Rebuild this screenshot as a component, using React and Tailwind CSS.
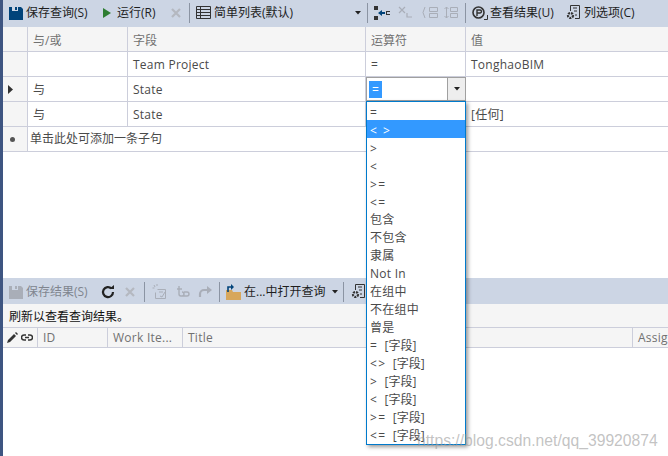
import React from "react";

const FF = "font-['Open_Sans','Noto_Sans_CJK_SC',sans-serif]";

const Save = ({ c = "#00437a" }) => (
  <svg width="14" height="14" viewBox="0 0 14 14"><path fill={c} d="M0 1h12l2 2v11H0z" /><path fill="#ccd5e4" d="M3 1h6v4H3z" /><path fill={c} d="M6 1h2v3H6z" /></svg>
);
const X = ({ c = "#b4b8c0" }) => (
  <svg width="10" height="10" viewBox="0 0 10 10"><path d="M1 1l8 8M9 1l-8 8" stroke={c} strokeWidth="2.2" /></svg>
);
const Sep = () => <div className="w-px h-5 bg-[#8b94a3] shrink-0" />;
const Caret = () => <svg width="6" height="4" viewBox="0 0 6 4" className="shrink-0"><path d="M0 0h6L3 3.5z" fill="#222" /></svg>;
const Gear = () => (
  <svg width="14" height="15" viewBox="0 0 14 15" fill="none"><path d="M4.500 6V.5h9v13H9" stroke="#333" /><path d="M7 3h4M8 6h3M9 10h2" stroke="#333" /><circle cx="4.500" cy="10.500" r="2.500" stroke="#333" strokeWidth="2.200" strokeDasharray="2 1" /></svg>
);

const ops = [["=", ""], ["< >", ""], [">", ""], ["<", ""], [">=", ""], ["<=", ""], ["", "包含"], ["", "不包含"], ["", "隶属"], ["", "Not In"], ["", "在组中"], ["", "不在组中"], ["", "曾是"], ["=", " [字段]"], ["<>", " [字段]"], [">", " [字段]"], ["<", " [字段]"], [">=", " [字段]"], ["<=", " [字段]"]];

const Row = ({ marker, a, b, c, d }) => (
  <div className="flex h-[25px] border-b border-[#cccedb] text-[12px] text-[#4a4a4a] shrink-0">
    <div className="w-[25px] bg-[#f5f5f5] border-r border-[#cccedb] flex items-center pl-[5px] shrink-0">{marker}</div>
    <div className="w-[100px] border-r border-[#cccedb] pl-[5px] pt-[2px] flex items-center shrink-0">{a}</div>
    <div className="w-[238px] border-r border-[#cccedb] pl-[5px] pt-[2px] flex items-center shrink-0 tracking-[0.25px]">{b}</div>
    <div className="w-[100px] border-r border-[#cccedb] pl-[5px] pt-[2px] flex items-center shrink-0">{c}</div>
    <div className="flex-1 pl-[5px] pt-[2px] flex items-center tracking-[0.25px]">{d}</div>
  </div>
);

export default function App() {
  return (
    <div className={`relative w-[668px] h-[456px] overflow-hidden bg-white flex ${FF}`}>
      <div className="w-[3px] bg-[#3e5581] shrink-0" />
      <div className="flex-1 flex flex-col min-w-0">
        {/* Top toolbar */}
        <div className="h-[27px] bg-[#ccd5e4] flex items-center text-[12px] text-[#1e1e1e] shrink-0 whitespace-nowrap pb-[2px]">
          <div className="ml-[6px]"><Save /></div>
          <span className="ml-[3px] w-[63px]">保存查询(S)</span>
          <svg className="ml-[13px]" width="10" height="12" viewBox="0 0 10 12"><path d="M1 1l8 5-8 5z" fill="#2d7d32" /></svg>
          <span className="ml-[5px] w-[39px]">运行(R)</span>
          <div className="ml-[15px]"><X /></div>
          <div className="ml-[8px]"><Sep /></div>
          <svg className="ml-[6px]" width="15" height="13" viewBox="0 0 15 13" fill="none" stroke="#333"><path d="M.5.5h14v12H.5zM.5 3.500h14M.5 6.500h14M.5 9.500h14M4.500.5v12" /></svg>
          <span className="ml-[3px] w-[141px]">简单列表(默认)</span>
          <Caret />
          <div className="ml-[6px]"><Sep /></div>
          <svg className="ml-[6px]" width="16" height="14" viewBox="0 0 16 14"><path d="M0 0h4v4H0zM0 10h4v4H0z" fill="#333" /><path d="M4 7l4-3v2h3v2H8v2z" fill="#00437a" /><path d="M12 5h4v1h-3v2h3v1h-4z" fill="#333" /></svg>
          <svg className="ml-[8px]" width="15" height="13" viewBox="0 0 15 13" fill="none" stroke="#a9aeb8" strokeWidth="1.2"><path d="M1 1l6 6M7 1l-6 6M9 7v4h5" /></svg>
          <svg className="ml-[9px]" width="16" height="13" viewBox="0 0 16 13" fill="none" stroke="#a9aeb8"><path d="M3 1L1 6.500 3 12M7.500 1.500h8v4h-8zM7.500 7.500h8v4h-8z" /></svg>
          <svg className="ml-[6px]" width="14" height="13" viewBox="0 0 14 13" fill="none" stroke="#a9aeb8"><path d="M2.500 1v11M.5 3l2-2 2 2M.5 10l2 2 2-2M6.500 1.500h7v4h-7zM6.500 7.500h7v4h-7z" /></svg>
          <div className="ml-[7px]"><Sep /></div>
          <svg className="ml-[6px]" width="16" height="14" viewBox="0 0 16 14" fill="none"><circle cx="6.500" cy="6.500" r="5.500" stroke="#333" strokeWidth="1.600" /><path d="M5 10V4h3a1.500 1.500 0 010 3H5" stroke="#333" strokeWidth="1.400" /><path d="M12 13.500h3.500V9" stroke="#333" /></svg>
          <span className="ml-[2px] w-[65px]">查看结果(U)</span>
          <div className="ml-[11px]"><Gear /></div>
          <span className="ml-[4px]">列选项(C)</span>
        </div>

        {/* Query grid */}
        <div className="flex h-[25px] border-b border-[#cccedb] bg-[#f5f5f5] text-[12px] text-[#717171] shrink-0">
          <div className="w-[25px] border-r border-[#cccedb] shrink-0" />
          <div className="w-[100px] border-r border-[#cccedb] pl-[5px] pt-[3px] flex items-center shrink-0">与/或</div>
          <div className="w-[238px] border-r border-[#cccedb] pl-[5px] pt-[3px] flex items-center shrink-0">字段</div>
          <div className="w-[100px] border-r border-[#cccedb] pl-[5px] pt-[3px] flex items-center shrink-0">运算符</div>
          <div className="flex-1 pl-[5px] pt-[3px] flex items-center">值</div>
        </div>
        <Row b="Team Project" c="=" d="TonghaoBIM" />
        <Row marker={<svg width="5" height="9" viewBox="0 0 5 9"><path d="M0 0l5 4.500L0 9z" fill="#333" /></svg>} a="与" b="State" />
        <Row a="与" b="State" d="[任何]" />
        <div className="flex h-[25px] border-b border-[#cccedb] text-[12px] text-[#4a4a4a] shrink-0">
          <div className="w-[25px] bg-[#f5f5f5] border-r border-[#cccedb] flex items-center pl-[7px] shrink-0"><div className="w-[5px] h-[5px] rounded-full bg-[#555]" /></div>
          <div className="pl-[2px] flex items-center">单击此处可添加一条子句</div>
        </div>
        <div className="flex-1" />

        {/* Results toolbar */}
        <div className="h-[26px] bg-[#ccd5e4] flex items-center text-[12px] text-[#1e1e1e] shrink-0 whitespace-nowrap pt-[1px]">
          <div className="ml-[6px]"><Save c="#a9aeb8" /></div>
          <span className="ml-[3px] w-[63px] text-[#80858f]">保存结果(S)</span>
          <svg className="ml-[12px]" width="14" height="14" viewBox="0 0 14 14" fill="none"><path d="M10.500 3.500A5 5 0 1012 7" stroke="#222" strokeWidth="2.200" /><path d="M8 4h5V0z" fill="#222" /></svg>
          <div className="ml-[10px]"><X /></div>
          <div className="ml-[9px]"><Sep /></div>
          <svg className="ml-[7px]" width="15" height="15" viewBox="0 0 15 15" fill="none" stroke="#a9aeb8"><path d="M2 1l1 2M5 0v2M.5 4h2M5.500 5.500h8v9h-10v-6M7 8h4M8 12l2 1 3-5" /></svg>
          <svg className="ml-[9px]" width="14" height="12" viewBox="0 0 14 12" fill="none" stroke="#a9aeb8" strokeWidth="1.400"><path d="M3 0v8a2 2 0 002 2h1M1 3h5M6 6a2 2 0 110 4h5a2 2 0 000-4H8" /></svg>
          <svg className="ml-[8px]" width="15" height="12" viewBox="0 0 15 12" fill="none"><path d="M2 11V8a4 4 0 014-4h5" stroke="#a9aeb8" strokeWidth="2.200" /><path d="M9 0l5 4-5 4z" fill="#a9aeb8" /></svg>
          <div className="ml-[6px]"><Sep /></div>
          <svg className="ml-[6px]" width="15" height="16" viewBox="0 0 15 16"><path d="M0 6h6l1 2h8v8H0z" fill="#d7a75c" /><path d="M2 8V3h3" stroke="#00437a" strokeWidth="1.600" fill="none" /><path d="M5 0l3 3-3 3z" fill="#00437a" /></svg>
          <span className="ml-[3px] w-[88px]">在...中打开查询</span>
          <Caret />
          <div className="ml-[5px]"><Sep /></div>
          <div className="ml-[7px]"><Gear /></div>
        </div>
        <div className="h-[23px] bg-[#f5f5f5] flex items-center pl-[6px] pt-[2px] text-[12px] text-[#111] shrink-0">刷新以查看查询结果。</div>
        <div className="h-[21px] bg-[#f5f5f5] border-y border-[#cccedb] flex text-[12px] text-[#717171] shrink-0 tracking-[0.25px]">
          <div className="w-[35px] border-r border-[#cccedb] flex items-center pl-[4px] gap-[3px] shrink-0">
            <svg width="11" height="11" viewBox="0 0 11 11"><path d="M0 11l1-3 6-6 2 2-6 6zM8 1l1-1 2 2-1 1z" fill="#333" /></svg>
            <svg width="12" height="8" viewBox="0 0 12 8" fill="none" stroke="#333" strokeWidth="1.500"><path d="M5 1H3a2.500 2.500 0 000 5h2M7 1h2a2.500 2.500 0 010 5H7M4 3.500h4" /></svg>
          </div>
          <div className="w-[70px] border-r border-[#cccedb] pl-[5px] flex items-center shrink-0">ID</div>
          <div className="w-[75px] border-r border-[#cccedb] pl-[5px] flex items-center shrink-0">Work Ite...</div>
          <div className="w-[450px] border-r border-[#cccedb] pl-[5px] flex items-center shrink-0">Title</div>
          <div className="pl-[5px] flex items-center">Assig</div>
        </div>
        <div className="h-[108px] shrink-0 bg-white" />
      </div>

      {/* Open combo editor */}
      <div className="absolute left-[366px] top-[77px] w-[100px] h-[24px] bg-white border border-[#a0a0a0] flex text-[12px]">
        <div className="flex-1 flex items-center pl-[2px]"><span className="bg-[#3399ff] text-white px-[3px] leading-[17px]">=</span></div>
        <div className="w-[18px] bg-[#eeeeee] border-l border-[#a0a0a0] flex items-center justify-center"><Caret /></div>
      </div>

      {/* Drop-down list */}
      <div className="absolute left-[366px] top-[101px] w-[100px] h-[344px] bg-white border border-[#007acc] shadow-[2px_2px_4px_rgba(0,0,0,0.4)] text-[12px] text-[#4a4a4a]">
        {ops.map(([sym, rest], i) => (
          <div key={i} className={`h-[18px] pl-[3px] whitespace-pre ${rest ? "leading-[20px]" : "leading-[22px]"} ${i === 1 ? "bg-[#3399ff] text-white" : ""} ${sym ? "" : "tracking-[0.25px]"}`}>
            {sym && <span className="tracking-[1.5px]">{sym}</span>}
            {sym && rest ? <span className="ml-[3px]">{rest}</span> : rest}
          </div>
        ))}
      </div>

      {/* Watermark */}
      <div className="absolute left-[417px] top-[429px] text-[15.7px] text-[#9a9a9a]/60 font-['Liberation_Sans',sans-serif] whitespace-nowrap">https://blog.csdn.net/qq_39920874</div>
    </div>
  );
}
